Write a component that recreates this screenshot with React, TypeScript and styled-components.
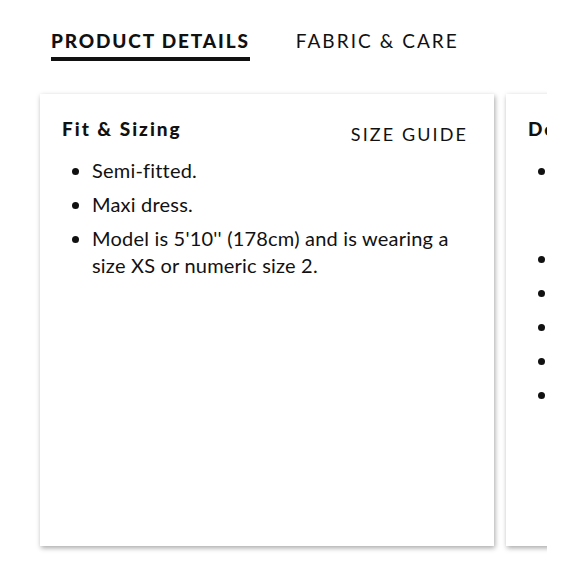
import React from "react";
import styled, { createGlobalStyle } from "styled-components";

const Global = createGlobalStyle`
  html, body { margin: 0; padding: 0; background: #fff; }
  body { font-family: "Lato", "Liberation Sans", sans-serif; color: #111; }
`;

const Page = styled.div`
  width: 547px;
  overflow: hidden;
  padding-top: 30px;
`;

const Tabs = styled.div`
  display: flex;
  gap: 46px;
  padding-left: 51px;
`;

const Tab = styled.div<{ $active?: boolean }>`
  font-size: 19px;
  font-weight: ${(p) => (p.$active ? 900 : 400)};
  letter-spacing: ${(p) => (p.$active ? "1.85px" : "2.05px")};
  padding-bottom: 6px;
  border-bottom: 4px solid ${(p) => (p.$active ? "#111" : "transparent")};
  line-height: 21px;
`;

const Scroller = styled.div`
  display: flex;
  gap: 12px;
  padding: 33px 0 12px 40px;
`;

const Card = styled.div`
  flex: 0 0 454px;
  height: 452px;
  box-sizing: border-box;
  background: #fff;
  box-shadow: 1px 2px 5px rgba(0, 0, 0, 0.35);
  padding: 24px 26px 24px 22px;
`;

const CardHead = styled.div`
  display: flex;
  justify-content: space-between;
  align-items: flex-start;
  min-height: 26px;
`;

const CardTitle = styled.div`
  font-size: 19px;
  font-weight: 900;
  letter-spacing: 2px;
  line-height: 22px;
`;

const SizeGuide = styled.div`
  font-size: 18px;
  letter-spacing: 2.1px;
  margin-top: 6px;
  line-height: 20px;
`;

const List = styled.ul`
  margin: 13px 0 0;
  padding-left: 30px;
`;

const Item = styled.li`
  font-size: 20px;
  letter-spacing: 0.2px;
  line-height: 27px;
  margin-bottom: 7px;
`;

export default function App() {
  return (
    <>
      <Global />
      <Page>
        <Tabs>
          <Tab $active>PRODUCT DETAILS</Tab>
          <Tab>FABRIC &amp; CARE</Tab>
        </Tabs>
        <Scroller>
          <Card>
            <CardHead>
              <CardTitle>Fit &amp; Sizing</CardTitle>
              <SizeGuide>SIZE GUIDE</SizeGuide>
            </CardHead>
            <List>
              <Item>Semi-fitted.</Item>
              <Item>Maxi dress.</Item>
              <Item>Model is 5'10'' (178cm) and is wearing a size XS or numeric size 2.</Item>
            </List>
          </Card>
          <Card>
            <CardHead>
              <CardTitle>Details</CardTitle>
            </CardHead>
            <List>
              <Item>Floral print maxi dress with a flattering silhouette and elegant design details for occasions.</Item>
              <Item>V-neckline.</Item>
              <Item>Short sleeves.</Item>
              <Item>Concealed back zip.</Item>
              <Item>Lined.</Item>
              <Item>Imported.</Item>
            </List>
          </Card>
        </Scroller>
      </Page>
    </>
  );
}
